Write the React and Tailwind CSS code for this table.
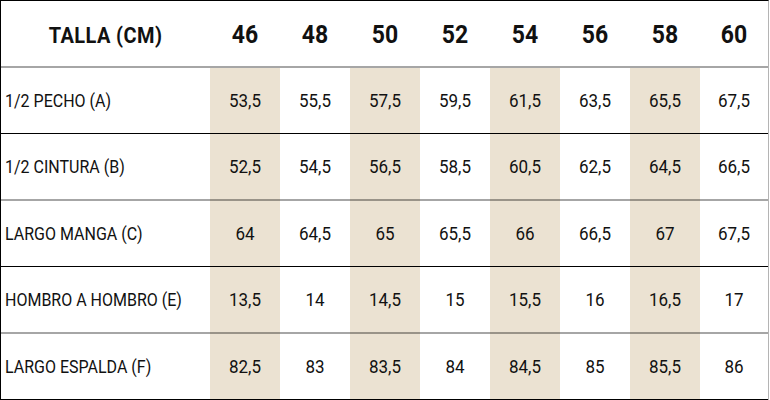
import React from "react";

const sizes = ["46", "48", "50", "52", "54", "56", "58", "60"];
const rows = [
  { label: "1/2 PECHO (A)", vals: ["53,5", "55,5", "57,5", "59,5", "61,5", "63,5", "65,5", "67,5"], line: "black" },
  { label: "1/2 CINTURA (B)", vals: ["52,5", "54,5", "56,5", "58,5", "60,5", "62,5", "64,5", "66,5"], line: "gray" },
  { label: "LARGO MANGA (C)", vals: ["64", "64,5", "65", "65,5", "66", "66,5", "67", "67,5"], line: "black" },
  { label: "HOMBRO A HOMBRO (E)", vals: ["13,5", "14", "14,5", "15", "15,5", "16", "16,5", "17"], line: "gray" },
  { label: "LARGO ESPALDA (F)", vals: ["82,5", "83", "83,5", "84", "84,5", "85", "85,5", "86"], line: "black" },
];

export default function App() {
  return (
    <div className="w-[770px] h-[400px] bg-white" style={{ fontFamily: "Roboto, 'Liberation Sans', sans-serif" }}>
      <div className="w-[769px] border-l border-r border-l-black border-r-[#b4b4b4] border-t border-t-black">
        <div className="grid grid-cols-[209px_repeat(7,70px)_68px] h-[67px] border-b-2 border-b-black/35 text-[#111] pt-[3px]">
          <div className="flex items-center justify-center font-bold text-[20px] tracking-[0.4px]">
            <span className="inline-block scale-y-[1.08]">TALLA (CM)</span>
          </div>
          {sizes.map((s) => (
            <div key={s} className="flex items-center justify-center font-bold text-[23px]">
              <span className="inline-block scale-y-[1.1]">{s}</span>
            </div>
          ))}
        </div>
        {rows.map((r) => (
          <div
            key={r.label}
            className={
              "grid grid-cols-[209px_repeat(7,70px)_68px] " +
              (r.line === "black" ? "h-[66px]" : "h-[67px]")
            }
          >
            <div
              className={
                "flex items-center pl-1 text-[16px] text-[#111] " +
                (r.line === "black" ? "border-b border-b-black" : "border-b-2 border-b-black/35")
              }
            >
              <span className="inline-block scale-y-[1.12]">{r.label}</span>
            </div>
            {r.vals.map((v, i) => (
              <div
                key={i}
                className={
                  "flex items-center justify-center text-[17px] text-[#111] " +
                  (i % 2 === 0 ? "bg-[#ebe2d2] " : "bg-white ") +
                  (r.line === "black" ? "border-b border-b-black" : "border-b-2 border-b-black/35")
                }
              >
                <span className="inline-block scale-y-[1.12]">{v}</span>
              </div>
            ))}
          </div>
        ))}
      </div>
    </div>
  );
}
